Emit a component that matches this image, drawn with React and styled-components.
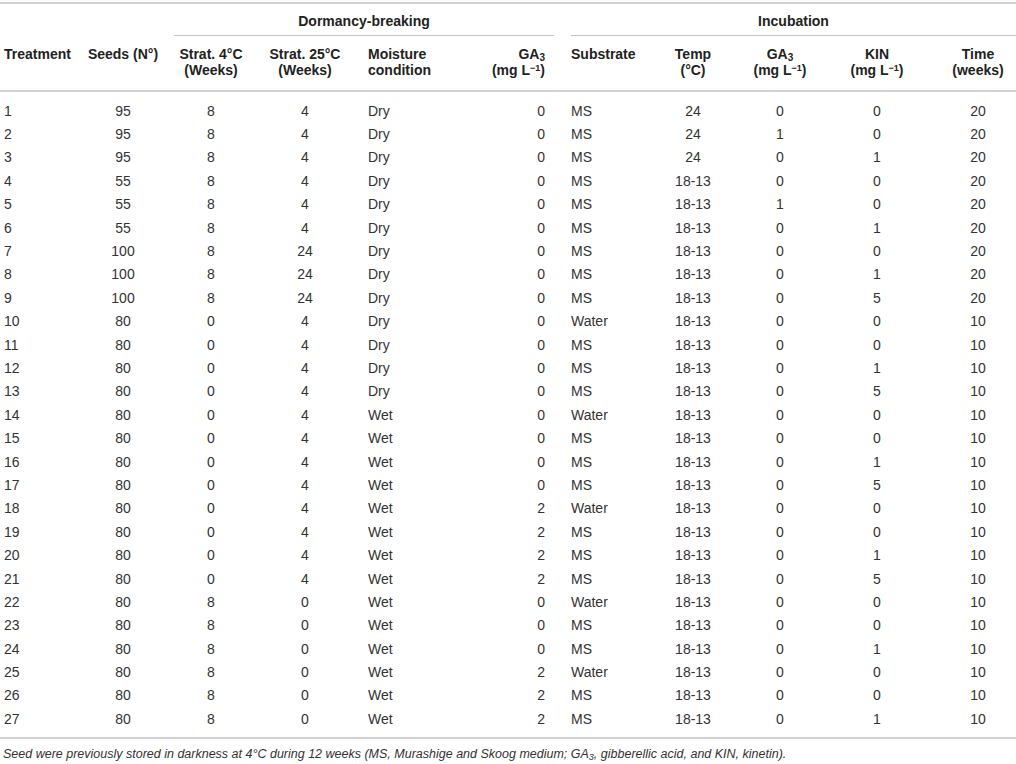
import React from "react";
import styled, { createGlobalStyle } from "styled-components";

const GlobalStyle = createGlobalStyle`
  body {
    margin: 0;
    background: #fff;
    font-family: "Liberation Sans", Arial, Helvetica, sans-serif;
  }
`;

// column widths, shared by every row of the grid
const COLS = "80px 86px 90px 98px 106px 98px 82px 106px 68px 126px 76px";

const cols = [
  { align: "left", pl: 4 },
  { align: "center" },
  { align: "center" },
  { align: "center" },
  { align: "left", pl: 14 },
  { align: "right", pr: 13 },
  { align: "left", pl: 13 },
  { align: "center" },
  { align: "center" },
  { align: "center" },
  { align: "center" },
];

const rows = [
  [1, 95, 8, 4, "Dry", 0, "MS", "24", 0, 0, 20],
  [2, 95, 8, 4, "Dry", 0, "MS", "24", 1, 0, 20],
  [3, 95, 8, 4, "Dry", 0, "MS", "24", 0, 1, 20],
  [4, 55, 8, 4, "Dry", 0, "MS", "18-13", 0, 0, 20],
  [5, 55, 8, 4, "Dry", 0, "MS", "18-13", 1, 0, 20],
  [6, 55, 8, 4, "Dry", 0, "MS", "18-13", 0, 1, 20],
  [7, 100, 8, 24, "Dry", 0, "MS", "18-13", 0, 0, 20],
  [8, 100, 8, 24, "Dry", 0, "MS", "18-13", 0, 1, 20],
  [9, 100, 8, 24, "Dry", 0, "MS", "18-13", 0, 5, 20],
  [10, 80, 0, 4, "Dry", 0, "Water", "18-13", 0, 0, 10],
  [11, 80, 0, 4, "Dry", 0, "MS", "18-13", 0, 0, 10],
  [12, 80, 0, 4, "Dry", 0, "MS", "18-13", 0, 1, 10],
  [13, 80, 0, 4, "Dry", 0, "MS", "18-13", 0, 5, 10],
  [14, 80, 0, 4, "Wet", 0, "Water", "18-13", 0, 0, 10],
  [15, 80, 0, 4, "Wet", 0, "MS", "18-13", 0, 0, 10],
  [16, 80, 0, 4, "Wet", 0, "MS", "18-13", 0, 1, 10],
  [17, 80, 0, 4, "Wet", 0, "MS", "18-13", 0, 5, 10],
  [18, 80, 0, 4, "Wet", 2, "Water", "18-13", 0, 0, 10],
  [19, 80, 0, 4, "Wet", 2, "MS", "18-13", 0, 0, 10],
  [20, 80, 0, 4, "Wet", 2, "MS", "18-13", 0, 1, 10],
  [21, 80, 0, 4, "Wet", 2, "MS", "18-13", 0, 5, 10],
  [22, 80, 8, 0, "Wet", 0, "Water", "18-13", 0, 0, 10],
  [23, 80, 8, 0, "Wet", 0, "MS", "18-13", 0, 0, 10],
  [24, 80, 8, 0, "Wet", 0, "MS", "18-13", 0, 1, 10],
  [25, 80, 8, 0, "Wet", 2, "Water", "18-13", 0, 0, 10],
  [26, 80, 8, 0, "Wet", 2, "MS", "18-13", 0, 0, 10],
  [27, 80, 8, 0, "Wet", 2, "MS", "18-13", 0, 1, 10],
];

const Table = styled.div`
  margin-top: 2px;
  border-top: 2px solid #d2d2d2;
  width: 1016px;
`;

const GroupRow = styled.div`
  display: grid;
  grid-template-columns: ${COLS};
  padding-top: 9px;
`;

const Group = styled.div`
  grid-column: ${(p) => p.$span};
  margin: 0 ${(p) => p.$mr || 0}px 0 ${(p) => p.$ml || 0}px;
  padding-bottom: 6px;
  border-bottom: 1px solid #c4c4c4;
  text-align: center;
  font-size: 14px;
  line-height: 16px;
  font-weight: bold;
  color: #222;
`;

const HeadRow = styled.div`
  display: grid;
  grid-template-columns: ${COLS};
  padding: 10px 0 12px;
  border-bottom: 2px solid #d2d2d2;
`;

const Th = styled.div`
  text-align: ${(p) => p.$align};
  padding-left: ${(p) => p.$pl || 0}px;
  padding-right: ${(p) => p.$pr || 0}px;
  font-size: 14px;
  line-height: 16px;
  font-weight: bold;
  color: #222;
  white-space: nowrap;
`;

const Body = styled.div`
  padding: 7px 0 6px;
  border-bottom: 2px solid #d2d2d2;
`;

const Row = styled.div`
  display: grid;
  grid-template-columns: ${COLS};
  height: 23.4px;
  align-items: center;
`;

const Td = styled.div`
  text-align: ${(p) => p.$align};
  padding-left: ${(p) => p.$pl || 0}px;
  padding-right: ${(p) => p.$pr || 0}px;
  font-size: 14px;
  line-height: 16px;
  color: #333;
`;

const Sub = styled.sub`
  font-size: ${(p) => p.$size || 10}px;
  vertical-align: -2px;
  line-height: 0;
`;

const Sup = styled.sup`
  font-size: 9px;
  vertical-align: 4px;
  line-height: 0;
`;

const Note = styled.p`
  margin: 0;
  padding: 7px 0 0 3px;
  font-size: 12.5px;
  line-height: 16px;
  font-style: italic;
  color: #333;
`;

const MgL = () => (
  <>
    (mg L<Sup>−1</Sup>)
  </>
);

const GA = ({ size }) => (
  <>
    GA<Sub $size={size}>3</Sub>
  </>
);

const headers = [
  "Treatment",
  "Seeds (N°)",
  <>Strat. 4°C<br />(Weeks)</>,
  <>Strat. 25°C<br />(Weeks)</>,
  <>Moisture<br />condition</>,
  <><GA /><br /><MgL /></>,
  "Substrate",
  <>Temp<br />(°C)</>,
  <><GA /><br /><MgL /></>,
  <>KIN<br /><MgL /></>,
  <>Time<br />(weeks)</>,
];

export default function App() {
  return (
    <>
      <GlobalStyle />
      <Table>
        <GroupRow>
          <Group $span="3 / 7" $ml={8} $mr={4}>Dormancy-breaking</Group>
          <Group $span="7 / 12" $ml={13}>Incubation</Group>
        </GroupRow>
        <HeadRow>
          {headers.map((h, i) => (
            <Th key={i} $align={cols[i].align} $pl={cols[i].pl} $pr={cols[i].pr}>
              {h}
            </Th>
          ))}
        </HeadRow>
        <Body>
          {rows.map((r) => (
            <Row key={r[0]}>
              {r.map((v, i) => (
                <Td key={i} $align={cols[i].align} $pl={cols[i].pl} $pr={cols[i].pr}>
                  {v}
                </Td>
              ))}
            </Row>
          ))}
        </Body>
        <Note>
          Seed were previously stored in darkness at 4°C during 12 weeks (MS, Murashige and Skoog
          medium; <GA size={9} />, gibberellic acid, and KIN, kinetin).
        </Note>
      </Table>
    </>
  );
}
